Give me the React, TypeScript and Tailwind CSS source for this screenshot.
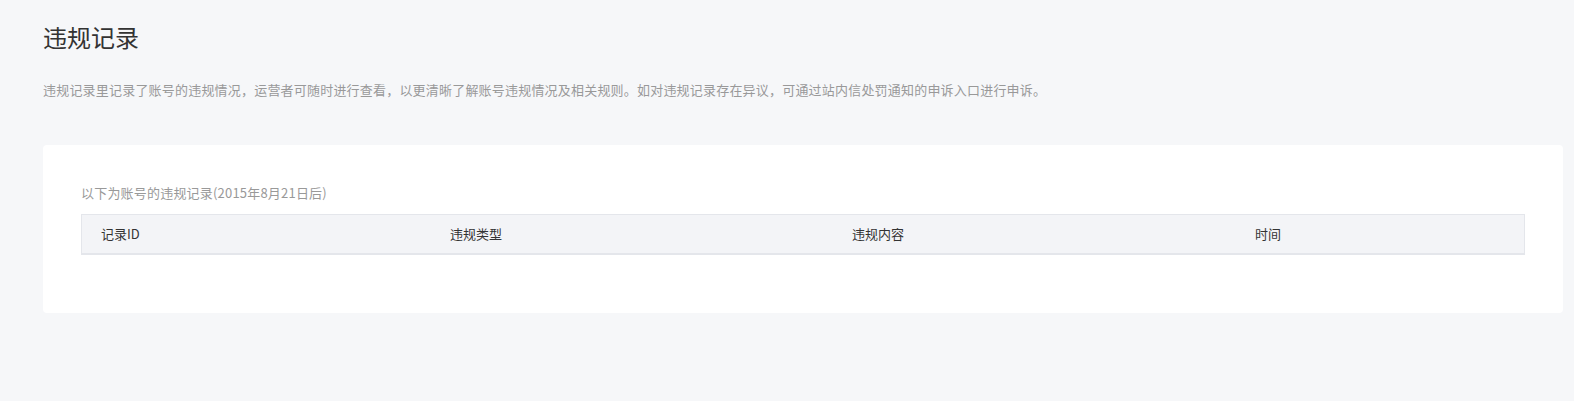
/**
 * ViolationRecords — 违规记录 page: intro text and an empty records table.
 */

const FONT = `font-['Microsoft_YaHei','Noto_Sans_CJK_SC',sans-serif]`;

const COLUMNS = [
  { label: "记录ID", width: "w-[349px]" },
  { label: "违规类型", width: "w-[402px]" },
  { label: "违规内容", width: "w-[403px]" },
  { label: "时间", width: "flex-1" },
];

export default function App() {
  return (
    <div className={`min-h-[401px] bg-[#f6f7f9] pt-[21px] pb-[89px] ${FONT}`}>
      <div className="pl-[43px]">
        <h1 className="text-[24px] leading-[32px] font-normal text-[#333]">违规记录</h1>
        <p className="mt-[27px] text-[13px] leading-[20px] tracking-[0.2px] text-[#999]">
          违规记录里记录了账号的违规情况，运营者可随时进行查看，以更清晰了解账号违规情况及相关规则。如对违规记录存在异议，可通过站内信处罚通知的申诉入口进行申诉。
        </p>
      </div>

      {/* Records card */}
      <div className="ml-[43px] mt-[45px] w-[1520px] rounded-[4px] bg-white px-[38px] pt-[38px] pb-[58px]">
        <p className="text-[13px] leading-[20px] tracking-[0.2px] text-[#999]">
          以下为账号的违规记录(2015年8月21日后)
        </p>
        <div className="mt-[11px] flex h-[41px] items-center border border-b-2 border-[#e4e6eb] bg-[#f3f4f7] text-[13px] text-[#333]">
          {COLUMNS.map((col) => (
            <div key={col.label} className={`${col.width} pl-[19px]`}>
              {col.label}
            </div>
          ))}
        </div>
      </div>
    </div>
  );
}
